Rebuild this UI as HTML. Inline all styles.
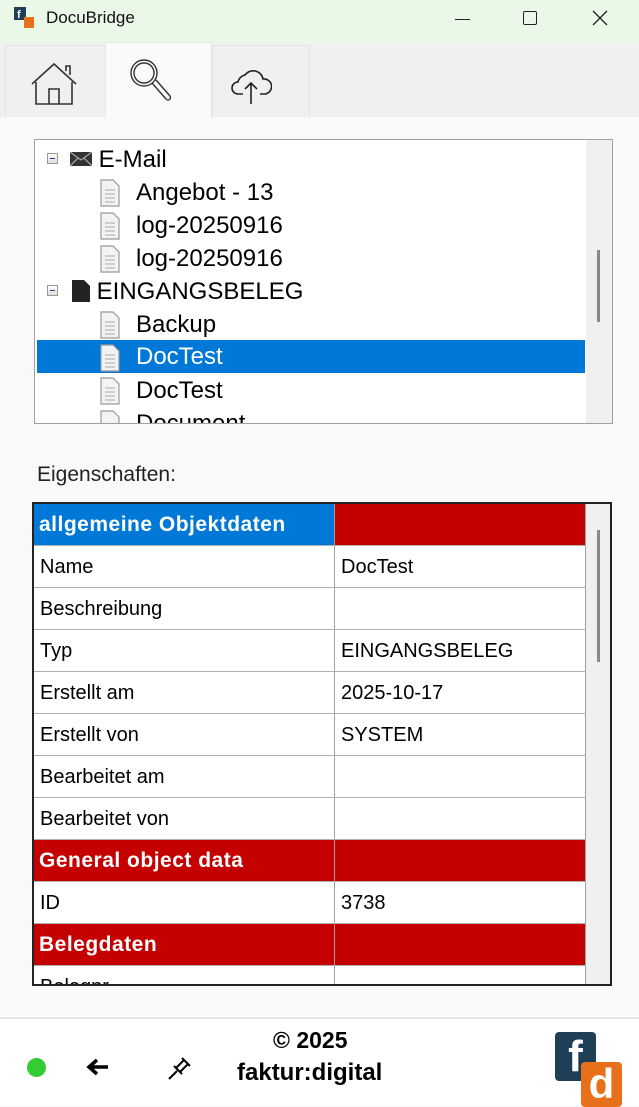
<!DOCTYPE html>
<html><head><meta charset="utf-8"><style>
*{box-sizing:border-box;margin:0;padding:0}
body{width:639px;height:1105px;position:relative;background:#f9f9f9;font-family:"Liberation Sans",sans-serif;overflow:hidden}
.abs{position:absolute}
.title{left:0;top:0;width:639px;height:42px;background:#eaf8e7}
.tabs{left:0;top:42px;width:639px;height:75px;background:#f0f0f0}
.tab{position:absolute;top:3px;height:72px;background:#f0f0f0;border:1px solid #e2e2e2;border-bottom:none}
.tree{left:34px;top:139px;width:579px;height:285px;background:#fff;border:1px solid #a0a0a0;overflow:hidden}
.tr{position:absolute;left:0;height:33px;font-size:24px;line-height:33px;color:#000;white-space:nowrap}
.grid{left:32px;top:502px;width:580px;height:484px;border:2px solid #222;background:#f0f0f0;overflow:hidden}
.row{position:absolute;left:0;width:552px;height:42px;font-size:20px;line-height:42px}
.c1,.c2{position:absolute;top:0;height:42px;border-right:1px solid #a0a0a0;border-bottom:1px solid #b0b0b0;padding-left:6px;background:#fff}
.c1{left:0;width:301px}.c2{left:301px;width:251px}
.h .c1,.h .c2{background:#c40000;color:#fff;font-weight:bold;font-size:21px;padding-left:5px;letter-spacing:0.5px}
.foot{left:0;top:1017px;width:639px;height:88px;background:#fff;border-top:2px solid #e6e6e6}
</style></head><body>
<div class="abs title">
 <svg class="abs" style="left:14px;top:7px" width="22" height="22"><rect x="0" y="0" width="12" height="13" fill="#1e3f55"/><text x="3" y="11" font-size="11" fill="#fff" font-family="Liberation Sans" font-weight="bold">f</text><rect x="10" y="10" width="10" height="11" fill="#e8701a"/></svg>
 <div class="abs" style="left:46px;top:8px;font-size:17px;color:#111">DocuBridge</div>
 <div class="abs" style="left:455px;top:19px;width:15px;height:1px;background:#222"></div>
 <div class="abs" style="left:523px;top:11px;width:14px;height:14px;border:1.5px solid #222;border-radius:2px"></div>
 <svg class="abs" style="left:592px;top:10px" width="16" height="16"><path d="M1 1L15 15M15 1L1 15" stroke="#222" stroke-width="1.3"/></svg>
</div>
<div class="abs tabs">
 <div class="tab" style="left:5px;width:101px"></div>
 <div class="tab" style="left:212px;width:98px"></div>
 <div class="tab" style="left:105px;top:0;width:107px;height:76px;background:#fafafa;border-color:#e8e8e8"></div>
 <svg class="abs" style="left:30px;top:20px" width="50" height="46" fill="none" stroke="#333" stroke-width="1.6"><path d="M2 22L24 2L46 22M6 20V42H42V20M19 42V27H29V42M36 9V4H40V13"/></svg>
 <svg class="abs" style="left:128px;top:16px" width="48" height="48" fill="none" stroke="#333" stroke-width="1.4"><circle cx="16" cy="15" r="13"/><circle cx="16" cy="15" r="10"/><path d="M24 25L38 41a2.5 2.5 0 0 0 4-3L28 22"/></svg>
 <svg class="abs" style="left:230px;top:22px" width="42" height="40" fill="none" stroke="#222" stroke-width="1.6"><path d="M13 30H8a6 6 0 0 1 0-12a9 9 0 0 1 7-7a10 10 0 0 1 18 4a7 7 0 0 1 2 15h-5"/><path d="M21 40V19M15 25l6-6l6 6"/></svg>
</div>
<div class="abs tree">
 <div class="tr" style="top:3px;left:12px"><span style="display:inline-block;width:11px;height:11px;border:1px solid #999;vertical-align:middle;position:relative;top:-2px;background:linear-gradient(#fff,#ddd)"><span style="position:absolute;left:2px;top:4px;width:5px;height:1px;background:#339"></span></span><svg width="22" height="14" style="margin-left:12px;vertical-align:middle;position:relative;top:-2px"><rect width="22" height="14" fill="#333"/><path d="M0 0L11 8L22 0M0 14L8 6M22 14L14 6" stroke="#bbb" fill="none"/></svg> E-Mail</div>
 <div class="tr" style="top:36px;left:101px">Angebot - 13</div>
 <div class="tr" style="top:69px;left:101px">log-20250916</div>
 <div class="tr" style="top:102px;left:101px">log-20250916</div>
 <div class="tr" style="top:135px;left:12px"><span style="display:inline-block;width:11px;height:11px;border:1px solid #999;vertical-align:middle;position:relative;top:-2px;background:linear-gradient(#fff,#ddd)"><span style="position:absolute;left:2px;top:4px;width:5px;height:1px;background:#339"></span></span><svg width="18" height="22" style="margin-left:14px;vertical-align:middle;position:relative;top:-2px"><path d="M0 0H12L18 6V22H0Z" fill="#222"/></svg> EINGANGSBELEG</div>
 <div class="tr" style="top:168px;left:101px">Backup</div>
 <div class="tr" style="top:200px;left:2px;width:548px;height:33px;background:#0078d7;color:#fff;padding-left:99px">DocTest</div>
 <div class="tr" style="top:234px;left:101px">DocTest</div>
 <div class="tr" style="top:267px;left:101px">Document</div>
 <svg class="abs" style="left:62px;top:0" width="26" height="300"><g fill="#f3f3f3" stroke="#999" stroke-width="1.2"><path d="M4 40H16L22 46V66H4Z"/><path d="M4 73H16L22 79V99H4Z"/><path d="M4 106H16L22 112V132H4Z"/><path d="M4 172H16L22 178V198H4Z"/><path d="M4 205H16L22 211V231H4Z"/><path d="M4 238H16L22 244V264H4Z"/><path d="M4 271H16L22 277V297H4Z"/></g><g stroke="#aaa"><path d="M8 50H18M8 54H18M8 58H18M8 62H18M8 83H18M8 87H18M8 91H18M8 95H18M8 116H18M8 120H18M8 124H18M8 128H18M8 182H18M8 186H18M8 190H18M8 194H18M8 215H18M8 219H18M8 223H18M8 227H18M8 248H18M8 252H18M8 256H18M8 260H18"/></g></svg>
 <div class="abs" style="left:551px;top:0;width:27px;height:285px;background:#f0f0f0"></div>
 <div class="abs" style="left:562px;top:110px;width:3px;height:72px;background:#888"></div>
</div>
<div class="abs" style="left:37px;top:463px;font-size:21px;color:#222">Eigenschaften:</div>
<div class="abs grid">
 <div class="row" style="top:0"><div class="c1" style="background:#0078d7;color:#fff;font-weight:bold;font-size:21px;padding-left:5px;letter-spacing:0.5px">allgemeine Objektdaten</div><div class="c2" style="background:#c40000"></div></div>
 <div class="row" style="top:42px"><div class="c1">Name</div><div class="c2">DocTest</div></div>
 <div class="row" style="top:84px"><div class="c1">Beschreibung</div><div class="c2"></div></div>
 <div class="row" style="top:126px"><div class="c1">Typ</div><div class="c2">EINGANGSBELEG</div></div>
 <div class="row" style="top:168px"><div class="c1">Erstellt am</div><div class="c2">2025-10-17</div></div>
 <div class="row" style="top:210px"><div class="c1">Erstellt von</div><div class="c2">SYSTEM</div></div>
 <div class="row" style="top:252px"><div class="c1">Bearbeitet am</div><div class="c2"></div></div>
 <div class="row" style="top:294px"><div class="c1">Bearbeitet von</div><div class="c2"></div></div>
 <div class="row h" style="top:336px"><div class="c1">General object data</div><div class="c2"></div></div>
 <div class="row" style="top:378px"><div class="c1">ID</div><div class="c2">3738</div></div>
 <div class="row h" style="top:420px"><div class="c1">Belegdaten</div><div class="c2"></div></div>
 <div class="row" style="top:462px"><div class="c1">Belegnr</div><div class="c2"></div></div>
 <div class="abs" style="left:563px;top:26px;width:3px;height:132px;background:#888"></div>
</div>
<div class="abs foot">
 <div class="abs" style="left:27px;top:39px;width:19px;height:19px;border-radius:50%;background:#33cc33"></div>
 <svg class="abs" style="left:86px;top:39px" width="24" height="18"><path d="M22 9H4M11 2L3 9L11 16" stroke="#000" stroke-width="3.5" fill="none"/></svg>
 <svg class="abs" style="left:166px;top:35px" width="28" height="28" fill="none" stroke="#000" stroke-width="2"><path d="M3 25L11 17M8 12L16 20M10 14L18 6M14 18L22 10M16 4L24 12"/></svg>
 <div class="abs" style="left:273px;top:8px;font-size:23px;font-weight:bold">© 2025</div>
 <div class="abs" style="left:237px;top:40px;font-size:24px;font-weight:bold">faktur:digital</div>
 <div class="abs" style="left:555px;top:13px;width:41px;height:49px;background:#1e3f55;border-radius:4px;color:#fff;font-size:44px;font-weight:bold;line-height:49px;text-align:center">f</div>
 <div class="abs" style="left:581px;top:43px;width:41px;height:45px;background:#e8701a;border-radius:4px;color:#fff;font-size:42px;font-weight:bold;line-height:44px;text-align:center">d</div>
</div>
</body></html>
